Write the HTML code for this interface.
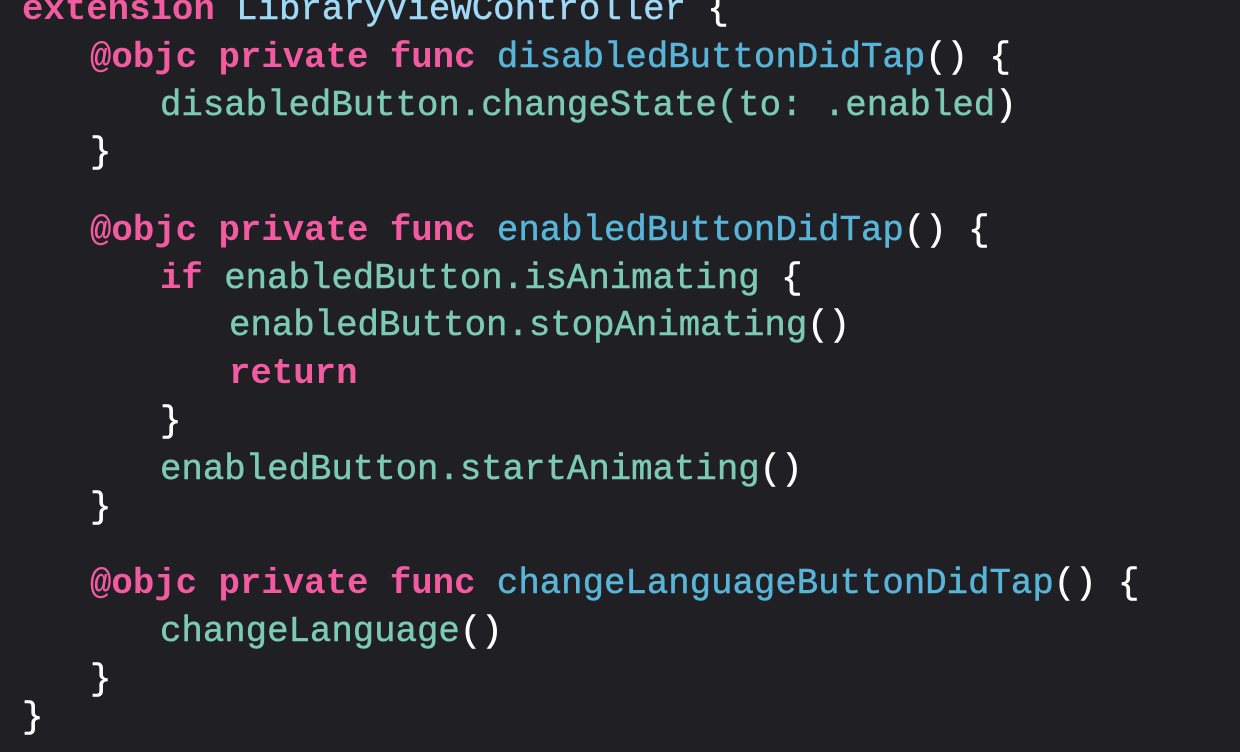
<!DOCTYPE html>
<html><head><style>
body{margin:0;width:1240px;height:752px;background:#1f1f24;overflow:hidden;position:relative}
.l{position:absolute;height:48px;line-height:48px;font-family:"Liberation Mono",monospace;font-size:35.7px;color:#fff;white-space:pre;-webkit-text-stroke:0.5px currentColor}
.k{color:#f25ba0;font-weight:bold;-webkit-text-stroke:0}
.t{color:#9fd9f5}
.f{color:#58b5d8}
.m{color:#7dcab3}
</style></head><body>
<div class="l" style="left:22px;top:-14px"><span class="k">extension</span> <span class="t">LibraryViewController</span> {</div>
<div class="l" style="left:90px;top:34px"><span class="k">@objc private func</span> <span class="f">disabledButtonDidTap</span>() {</div>
<div class="l" style="left:160px;top:82px"><span class="m">disabledButton.changeState(to: .enabled</span>)</div>
<div class="l" style="left:90px;top:129px">}</div>
<div class="l" style="left:90px;top:207px"><span class="k">@objc private func</span> <span class="f">enabledButtonDidTap</span>() {</div>
<div class="l" style="left:160px;top:255px"><span class="k">if</span> <span class="m">enabledButton.isAnimating</span> {</div>
<div class="l" style="left:229px;top:302px"><span class="m">enabledButton.stopAnimating</span>()</div>
<div class="l" style="left:229px;top:350px"><span class="k">return</span></div>
<div class="l" style="left:160px;top:398px">}</div>
<div class="l" style="left:160px;top:446px"><span class="m">enabledButton.startAnimating</span>()</div>
<div class="l" style="left:90px;top:484px">}</div>
<div class="l" style="left:90px;top:560px"><span class="k">@objc private func</span> <span class="f">changeLanguageButtonDidTap</span>() {</div>
<div class="l" style="left:160px;top:608px"><span class="m">changeLanguage</span>()</div>
<div class="l" style="left:90px;top:656px">}</div>
<div class="l" style="left:22px;top:694px">}</div>
</body></html>
